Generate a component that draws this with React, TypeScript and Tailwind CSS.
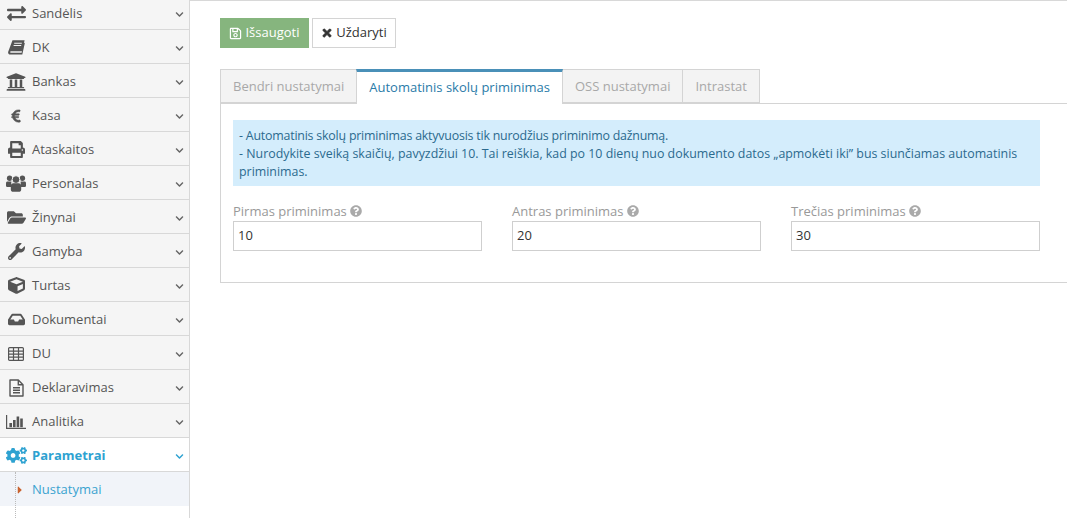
import React from "react";
import {
  FaExchangeAlt, FaUniversity, FaEuroSign, FaPrint, FaFolderOpen, FaWrench, FaCube,
  FaInbox, FaCogs, FaChevronDown, FaRegSave, FaTimes, FaQuestionCircle, FaCaretRight,
} from "react-icons/fa";

function BookIcon() {
  return (
    <svg width="17" height="15" viewBox="0 0 17 15" fill="#555">
      <path d="M4.5.3H16.6L14 11.3H3C2 11.3 1.8 12.6 2.8 12.8H13.6L16 2.6l.8.6L14.3 14.6H2.2C.7 14.6-.2 13.3.2 11.8Z" />
      <path d="M6.2 3.2h7.6M5.6 5.5h7.6" stroke="#f5f5f5" strokeWidth="1.1" />
    </svg>
  );
}

function UsersIcon() {
  return (
    <svg width="20" height="17" viewBox="0 0 20 17" fill="#555">
      <circle cx="3.6" cy="3.2" r="2.7" />
      <circle cx="16.4" cy="3.2" r="2.7" />
      <path d="M0 8.2C0 7 1 6.6 2 6.6h3.4L5 12H1C.3 12 0 11.4 0 10.8Z" />
      <path d="M20 8.2C20 7 19 6.6 18 6.6h-3.4L15 12h4c.7 0 1-.6 1-1.2Z" />
      <circle cx="10" cy="4.6" r="3.9" stroke="#f5f5f5" strokeWidth="1" />
      <path d="M4.8 11.2C4.8 9.2 5.8 8.2 7.4 8.2h5.2c1.6 0 2.6 1 2.6 3v3.3c0 1.4-1 2.3-2.4 2.3H7.2c-1.4 0-2.4-.9-2.4-2.3Z" />
    </svg>
  );
}

function TableIcon() {
  return (
    <svg width="16" height="14" viewBox="0 0 16 14" fill="none" stroke="#555" strokeWidth="1.2">
      <rect x=".6" y=".6" width="14.8" height="12.8" rx="1" />
      <path d="M.6 4.2h14.8M.6 7.2h14.8M.6 10.2h14.8M5.5.6v12.8M10.5.6v12.8" />
    </svg>
  );
}

function DocIcon() {
  return (
    <svg width="15" height="18" viewBox="0 0 15 18" fill="none" stroke="#555" strokeWidth="1.4">
      <path d="M1 1h8.3L14 5.7V17H1z" strokeLinejoin="round" />
      <path d="M9.3 1v4.7H14M4 8.7h7M4 11.2h7M4 13.7h7" />
    </svg>
  );
}

function ChartIcon() {
  return (
    <svg width="20" height="14" viewBox="0 0 20 14" fill="#555">
      <path d="M0 0h1.2v12.8H20V14H0z" />
      <rect x="3.4" y="8" width="2.6" height="4.2" />
      <rect x="7" y="5" width="2.6" height="7.2" />
      <rect x="10.6" y="1.5" width="2.6" height="10.7" />
      <rect x="14.2" y="3.5" width="2.6" height="8.7" />
    </svg>
  );
}

const items: [string, React.ReactNode][] = [
  ["Sandėlis", <FaExchangeAlt size={19} />],
  ["DK", <BookIcon />],
  ["Bankas", <FaUniversity size={20} />],
  ["Kasa", <FaEuroSign size={14} stroke="currentColor" strokeWidth={20} />],
  ["Ataskaitos", <FaPrint size={17} />],
  ["Personalas", <UsersIcon />],
  ["Žinynai", <FaFolderOpen size={19} />],
  ["Gamyba", <FaWrench size={17} />],
  ["Turtas", <FaCube size={17} />],
  ["Dokumentai", <FaInbox size={17} />],
  ["DU", <TableIcon />],
  ["Deklaravimas", <DocIcon />],
  ["Analitika", <ChartIcon />],
];

function Tab({ label, active, first }: { label: string; active?: boolean; first?: boolean }) {
  return active ? (
    <div className="h-[35px] -mb-px -ml-px px-[12px] pt-[5px] bg-white border-x border-[#d4d4d4] border-t-[3px] border-t-[#4a90b8] text-[#2a7ba8] relative z-10 leading-[20px]">
      {label}
    </div>
  ) : (
    <div className={first ? "h-[34px] px-[12px] pt-[6px] bg-[#f3f3f3] border border-[#d4d4d4] text-[#a8a8a8] leading-[20px]" : "h-[34px] px-[12px] pt-[6px] bg-[#f3f3f3] border border-[#d4d4d4] -ml-px text-[#a8a8a8] leading-[20px]"}>
      {label}
    </div>
  );
}

function Field({ label, value }: { label: string; value: string }) {
  return (
    <div className="flex-1">
      <div className="h-[20px] flex items-center gap-[3px] text-[#999] leading-[20px]">
        {label}
        <FaQuestionCircle size={12} className="text-[#aaa]" />
      </div>
      <div className="h-[30px] border border-[#cfcfcf] pl-[4px] text-[#333] leading-[27px]">{value}</div>
    </div>
  );
}

export default function App() {
  return (
    <div
      className="h-[518px] w-[1067px] overflow-hidden flex bg-white text-[13px]"
      style={{ fontFamily: '"Open Sans", sans-serif' }}
    >
      <aside className="w-[190px] shrink-0 border-r border-[#d8d8d8] bg-white flex flex-col">
        <div className="-mt-[4px]">
          {items.map(([name, icon]) => (
            <div key={name} className="h-[34px] pt-[2px] bg-[#f5f5f5] border-b border-[#d8d8d8] flex items-center text-[#555]">
              <span className="w-[32px] flex justify-center text-[#555]">{icon}</span>
              <span className="flex-1">{name}</span>
              <FaChevronDown size={9} className="mr-[5px] mt-[1px] text-[#666]" />
            </div>
          ))}
          <div className="h-[34px] pt-[2px] bg-white border-b border-[#d8d8d8] flex items-center text-[#2ea2d1] font-bold">
            <span className="w-[32px] flex justify-center"><FaCogs size={21} /></span>
            <span className="flex-1">Parametrai</span>
            <FaChevronDown size={9} className="mr-[5px] mt-[1px]" />
          </div>
          <div className="h-[34px] pt-[2px] bg-[#f1f4f9] flex items-center text-[#3aa3d0] relative">
            <span className="absolute left-[15px] top-0 h-[46px] border-l border-dotted border-[#bbb]" />
            <span className="w-[32px] pl-[14px] text-[#c9622e]"><FaCaretRight size={12} /></span>
            <span>Nustatymai</span>
          </div>
        </div>
      </aside>
      <main className="flex-1 min-w-0 border-t border-[#d8d8d8] h-[2px] pt-[17px] pl-[30px]">
        <div className="flex gap-[3px]">
          <button className="h-[30px] w-[89px] bg-[#86b57e] text-white flex items-center justify-center gap-[3px]">
            <FaRegSave size={13} />
            Išsaugoti
          </button>
          <button className="h-[30px] w-[84px] bg-white border border-[#d4d4d4] text-[#333] flex items-center justify-center gap-[3px]">
            <FaTimes size={12} stroke="currentColor" strokeWidth={30} />
            Uždaryti
          </button>
        </div>
        <div className="mt-[21px] flex border-b border-[#d4d4d4] h-[35px] items-end">
          <Tab label="Bendri nustatymai" first />
          <Tab label="Automatinis skolų priminimas" active />
          <Tab label="OSS nustatymai" />
          <Tab label="Intrastat" />
        </div>
        <div className="h-[179px] border-l border-b border-[#d4d4d4] pt-[16px] pl-[12px] pr-[27px]">
          <div className="h-[66px] bg-[#d4edfc] text-[#2b6a8e] text-[12.4px] leading-[18px] pt-[7px] px-[6px]">
            <p className="tracking-[-0.21px]">- Automatinis skolų priminimas aktyvuosis tik nurodžius priminimo dažnumą.</p>
            <p>- Nurodykite sveiką skaičių, pavyzdžiui 10. Tai reiškia, kad po 10 dienų nuo dokumento datos „apmokėti iki” bus siunčiamas automatinis priminimas.</p>
          </div>
          <div className="flex gap-[30px] mt-[15px]">
            <Field label="Pirmas priminimas" value="10" />
            <Field label="Antras priminimas" value="20" />
            <Field label="Trečias priminimas" value="30" />
          </div>
        </div>
      </main>
    </div>
  );
}
